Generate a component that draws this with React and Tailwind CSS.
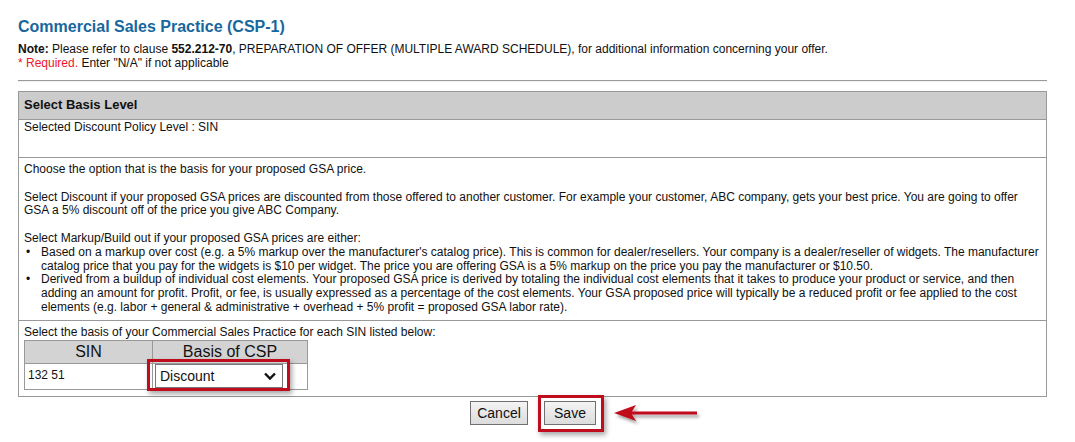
import React, { useState } from "react";

const Arrow = () => (
  <svg width="90" height="24" viewBox="0 0 90 24" className="overflow-visible">
    <defs>
      <filter id="arrowShadow" x="-20%" y="-50%" width="140%" height="200%">
        <feDropShadow dx="2" dy="3" stdDeviation="1.6" floodColor="#000" floodOpacity="0.35" />
      </filter>
    </defs>
    <g filter="url(#arrowShadow)">
      <path d="M1 11 L23 3 L19 9.5 L84 9.5 L84 12.5 L19 12.5 L23 19 Z" fill="#c00d1e" />
    </g>
  </svg>
);

const Chevron = () => (
  <svg width="14" height="10" viewBox="0 0 14 10">
    <path d="M2 2.5 L7 7.5 L12 2.5" fill="none" stroke="#111" strokeWidth="2.4" />
  </svg>
);

const App = () => {
  const [basis, setBasis] = useState("Discount");

  return (
    <div className="min-h-[442px] bg-white font-['Liberation_Sans',Arial,sans-serif] text-[12px] leading-[1.15] text-[#111] pt-[18px]">
      <div className="ml-[18px] w-[1029px]">
        <h1 className="text-[16px] font-bold leading-[1.15] text-[#17679e]">
          Commercial Sales Practice (CSP-1)
        </h1>
        <p className="mt-[7px]">
          <span className="font-bold">Note:</span> Please refer to clause{" "}
          <span className="font-bold">552.212-70</span>, PREPARATION OF OFFER (MULTIPLE AWARD SCHEDULE), for additional
          information concerning your offer.
        </p>
        <p>
          <span className="text-[#f0142c]">* Required.</span> Enter "N/A" if not applicable
        </p>

        <div className="mt-[9px] h-px bg-[#999]" />
        <div className="h-px bg-[#f2f2f2]" />

        <div className="mt-[9px] border border-[#999]">
          <div className="flex h-[28px] items-center border-b border-[#999] bg-[#cccccc] px-[5px] text-[13px] font-bold">
            Select Basis Level
          </div>

          <div className="h-[38px] border-b border-[#999] px-[5px] pt-px">Selected Discount Policy Level : SIN</div>

          <div className="border-b border-[#999] px-[5px] pb-[5px] pt-[5px] whitespace-nowrap">
            <div>Choose the option that is the basis for your proposed GSA price.</div>
            <div className="h-[13.8px]" />
            <div>
              Select Discount if your proposed GSA prices are discounted from those offered to another customer. For
              example your customer, ABC company, gets your best price. You are going to offer
            </div>
            <div>GSA a 5% discount off of the price you give ABC Company.</div>
            <div className="h-[13.8px]" />
            <div>Select Markup/Build out if your proposed GSA prices are either:</div>
            <div className="flex">
              <span className="w-[17px] pl-[2px]">•</span>
              <div>
                <div>
                  Based on a markup over cost (e.g. a 5% markup over the manufacturer's catalog price). This is common
                  for dealer/resellers. Your company is a dealer/reseller of widgets. The manufacturer
                </div>
                <div>
                  catalog price that you pay for the widgets is $10 per widget. The price you are offering GSA is a 5%
                  markup on the price you pay the manufacturer or $10.50.
                </div>
              </div>
            </div>
            <div className="flex">
              <span className="w-[17px] pl-[2px]">•</span>
              <div>
                <div>
                  Derived from a buildup of individual cost elements. Your proposed GSA price is derived by totaling the
                  individual cost elements that it takes to produce your product or service, and then
                </div>
                <div>
                  adding an amount for profit. Profit, or fee, is usually expressed as a percentage of the cost elements.
                  Your GSA proposed price will typically be a reduced profit or fee applied to the cost
                </div>
                <div>elements (e.g. labor + general &amp; administrative + overhead + 5% profit = proposed GSA labor rate).</div>
              </div>
            </div>
          </div>

          <div className="px-[5px] pb-[6px] pt-[5px]">
            <div>Select the basis of your Commercial Sales Practice for each SIN listed below:</div>
            <table className="border-collapse border border-[#999]">
              <thead>
                <tr className="h-[23px] bg-[#d3d3d3] text-[16px] leading-none">
                  <th className="w-[128px] border border-[#999] font-normal">SIN</th>
                  <th className="w-[155px] border border-[#999] font-normal">Basis of CSP</th>
                </tr>
              </thead>
              <tbody>
                <tr className="h-[26px]">
                  <td className="border border-[#999] pl-[3px]">132 51</td>
                  <td className="border border-[#999] pl-[2px]">
                    <div className="relative w-[128px]">
                      <select
                        value={basis}
                        onChange={(e) => setBasis(e.target.value)}
                        className="block h-[24px] w-[128px] appearance-none border border-[#767676] bg-white pl-[4px] text-[14px] leading-none text-[#111] outline-none"
                      >
                        <option>Discount</option>
                        <option>Markup/Build out</option>
                      </select>
                      <span className="pointer-events-none absolute right-[6px] top-[7px]">
                        <Chevron />
                      </span>
                      <span className="pointer-events-none absolute -bottom-[3px] -left-[8px] -right-[7px] -top-[5px] border-[3px] border-[#c00d1e] shadow-[2px_3px_5px_rgba(0,0,0,0.35)]" />
                    </div>
                  </td>
                </tr>
              </tbody>
            </table>
          </div>
        </div>

        <div className="mt-[4px] flex justify-center gap-[16px] pl-[1px]">
          <button className="h-[24px] w-[58px] border border-[#707070] bg-gradient-to-b from-[#f4f4f4] to-[#dcdcdc] text-[14px] leading-none text-[#111]">
            Cancel
          </button>
          <div className="relative">
            <button className="h-[24px] w-[52px] border border-[#707070] bg-gradient-to-b from-[#f4f4f4] to-[#dcdcdc] text-[14px] leading-none text-[#111]">
              Save
            </button>
            <span className="pointer-events-none absolute -bottom-[7px] -left-[6px] -right-[8px] -top-[6px] border-[3px] border-[#c00d1e] shadow-[2px_3px_5px_rgba(0,0,0,0.35)]" />
            <span className="pointer-events-none absolute left-[69px] top-[1px]">
              <Arrow />
            </span>
          </div>
        </div>
      </div>
    </div>
  );
};

export default App;
